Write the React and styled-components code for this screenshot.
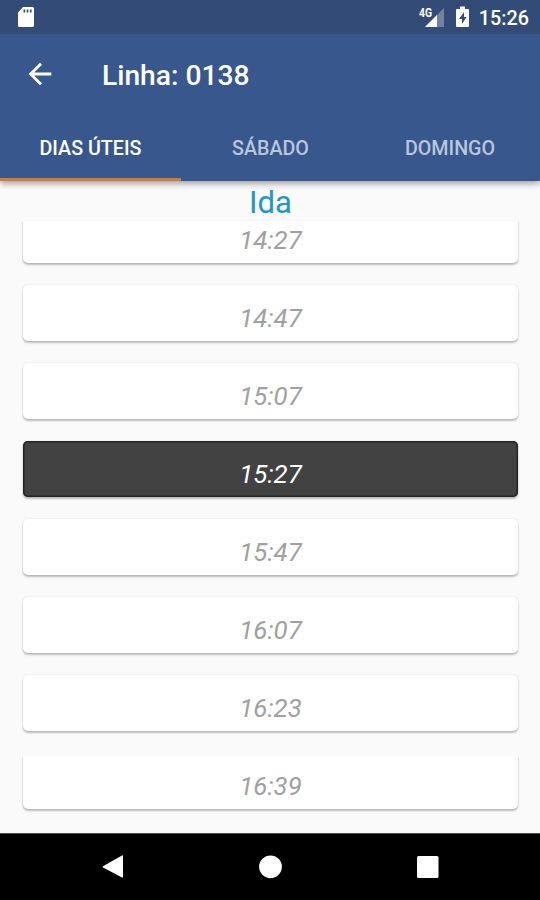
import React from "react";
import styled, { createGlobalStyle } from "styled-components";

const GlobalStyle = createGlobalStyle`
  * { box-sizing: border-box; }
  body { margin: 0; background: #fafafa; font-family: Roboto, sans-serif; }
`;

const Screen = styled.div`
  display: flex;
  flex-direction: column;
  width: 540px;
  height: 900px;
  overflow: hidden;
  background: #fafafa;
`;

const Header = styled.header`
  flex: none;
  height: 181px;
  background: #37578d;
  box-shadow: 0 2px 7px rgba(0, 0, 0, 0.42);
  z-index: 1;
`;

const StatusBar = styled.div`
  display: flex;
  align-items: center;
  justify-content: space-between;
  height: 34px;
  padding: 0 11px 0 17px;
  background: #334c77;
  color: #fff;
`;

const StatusGroup = styled.div`
  display: flex;
  align-items: center;
`;

const Clock = styled.span`
  margin-left: 8px;
  padding-top: 4px;
  font-size: 19.8px;
  line-height: 24px;
  font-weight: 500;
`;

const Icon = styled.svg`
  display: block;
  flex: none;
  fill: #fff;
`;

const NetworkLabel = styled.text`
  font: 700 12.5px Roboto, sans-serif;
`;

const AppBar = styled.div`
  display: flex;
  align-items: center;
  height: 81px;
  padding-left: 23px;
`;

const BackButton = styled.button`
  display: flex;
  padding: 0;
  margin: 0 45px 2px 0;
  border: 0;
  background: none;
`;

const Title = styled.h1`
  margin: 2px 0 0;
  color: #fff;
  font-size: 28.2px;
  line-height: 36px;
  font-weight: 500;
`;

const Tabs = styled.nav`
  display: grid;
  grid-template-columns: 181px 179px 180px;
  height: 66px;
`;

const Tab = styled.button`
  padding: 3px 0 0;
  border: 0;
  border-bottom: 3px solid ${(p) => (p.$active ? "#d27a35" : "transparent")};
  background: none;
  color: ${(p) => (p.$active ? "#fff" : "#b9c6dc")};
  font: 500 19.7px Roboto, sans-serif;
`;

const Direction = styled.h2`
  flex: none;
  height: 41px;
  margin: 0;
  padding: 3px 0 0 1px;
  color: #2196c8;
  font-size: 31px;
  line-height: 38px;
  font-weight: 400;
  text-align: center;
`;

const Times = styled.main`
  display: flex;
  flex: 1;
  flex-direction: column;
  justify-content: flex-end;
  gap: 22px;
  min-height: 0;
  padding: 0 22px 24px 23px;
  overflow: hidden;
`;

const TimeCard = styled.div`
  flex: none;
  height: 56px;
  padding: 10px 0 0;
  border-radius: 5px;
  background: ${(p) => (p.$current ? "#424242" : "#fff")};
  box-shadow: ${(p) => (p.$current ? "inset 0 0 0 1.5px #242424, " : "")}
    0 2px 2px rgba(0, 0, 0, 0.24), 0 0 2px rgba(0, 0, 0, 0.13);
  color: ${(p) => (p.$current ? "#fff" : "#a0a0a0")};
  font-size: 25.8px;
  line-height: 46px;
  font-style: italic;
  font-weight: 400;
  text-align: center;

  &:last-child {
    height: 53px;
    margin-top: 3px;
    padding-top: 7px;
    border-radius: 0 0 5px 5px;
    clip-path: inset(0 -4px -6px);
  }
`;

const NavBar = styled.footer`
  display: flex;
  flex: none;
  align-items: center;
  justify-content: space-between;
  height: 67px;
  padding: 0 100px 0 101px;
  border-top: 1px solid #505050;
  background: #000;
`;

const times = ["14:27", "14:47", "15:07", "15:27", "15:47", "16:07", "16:23", "16:39"];

export default function App() {
  return (
    <>
      <GlobalStyle />
      <Screen>
        <Header>
          <StatusBar>
            <Icon width="18" height="22" viewBox="0 0 18 22">
              <path
                fillRule="evenodd"
                d="M6 1h9.5Q17 1 17 2.5v17q0 1.5-1.5 1.5h-13Q1 21 1 19.5V6.5ZM6.5 3.5v3h1.7v-3Zm3.2 0v3h1.7v-3Zm3.2 0v3h1.7v-3Z"
              />
            </Icon>
            <StatusGroup>
              <Icon width="27" height="24" viewBox="0 0 27 24">
                <path d="M25 3v19H6Z" opacity=".3" />
                <path d="M18 10v12H6Z" />
                <NetworkLabel x="0" y="11.5" textLength="13" lengthAdjust="spacingAndGlyphs">
                  4G
                </NetworkLabel>
              </Icon>
              <Icon width="25" height="24" viewBox="1 0 25 24">
                <path
                  fillRule="evenodd"
                  d="M15 1.5h5V4H23q1 0 1 1v16q0 1-1 1H12q-1 0-1-1V5q0-1 1-1h3ZM19 7l-5 7h3v5l4.5-7H19Z"
                />
              </Icon>
              <Clock>15:26</Clock>
            </StatusGroup>
          </StatusBar>
          <AppBar>
            <BackButton aria-label="Voltar">
              <Icon width="34" height="34" viewBox="0 0 24 24">
                <path d="M20 11H7.83l5.59-5.59L12 4l-8 8 8 8 1.41-1.41L7.83 13H20v-2z" />
              </Icon>
            </BackButton>
            <Title>Linha: 0138</Title>
          </AppBar>
          <Tabs>
            <Tab $active>DIAS ÚTEIS</Tab>
            <Tab>SÁBADO</Tab>
            <Tab>DOMINGO</Tab>
          </Tabs>
        </Header>
        <Direction>Ida</Direction>
        <Times>
          {times.map((time) => (
            <TimeCard key={time} $current={time === "15:27"}>
              {time}
            </TimeCard>
          ))}
        </Times>
        <NavBar>
          <Icon width="24" height="26" viewBox="0 0 24 26">
            <path d="M2 12.2 21 1.5q1-.5 1 .5v21q0 1-1 .5L2 13.5q-1-.7 0-1.3Z" />
          </Icon>
          <Icon width="24" height="24" viewBox="0 0 24 24">
            <circle cx="11.5" cy="11.8" r="11.4" />
          </Icon>
          <Icon width="24" height="24" viewBox="0 0 24 24">
            <rect x="1" y="1" width="21.5" height="22" rx="1.5" />
          </Icon>
        </NavBar>
      </Screen>
    </>
  );
}
